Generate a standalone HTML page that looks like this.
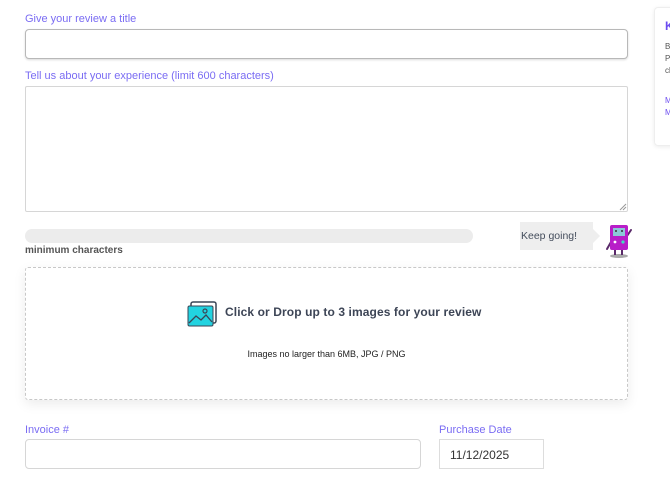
<!DOCTYPE html>
<html><head><style>
*{box-sizing:border-box;margin:0;padding:0}
body{width:670px;height:479px;background:#fff;font-family:"Liberation Sans",sans-serif;position:relative;overflow:hidden}
.a{position:absolute}
.lbl{color:#7a6cf3;font-size:11px}
.inp{border:1px solid #d6d6d6;border-radius:4px;background:#fff}
</style></head><body>
<div class="a lbl" style="left:25px;top:13px">Give your review a title</div>
<div class="a inp" style="left:25px;top:29px;width:603px;height:30px;border:1px solid #b8b8b8;box-shadow:0 1px 2px rgba(0,0,0,.15)"></div>
<div class="a lbl" style="left:25px;top:70px">Tell us about your experience (limit 600 characters)</div>
<div class="a inp" style="left:25px;top:86px;width:603px;height:126px;border-radius:2px"></div>
<svg class="a" style="left:619px;top:203px" width="8" height="8"><path d="M7 1L1 7M7 4L4 7" stroke="#999" stroke-width="1"/></svg>
<div class="a" style="left:25px;top:229px;width:448px;height:14px;background:#ececec;border-radius:7px"></div>
<div class="a" style="left:25px;top:245px;font-size:10px;font-weight:bold;color:#555">minimum characters</div>
<div class="a" style="left:520px;top:222px;width:73px;height:28px;background:#eeeeee;font-size:10.5px;color:#444d5c;line-height:28px;padding-left:1px">Keep going!</div>
<div class="a" style="left:593px;top:229px;width:0;height:0;border-top:7px solid transparent;border-bottom:7px solid transparent;border-left:7px solid #eee"></div>
<svg class="a" style="left:603px;top:222px" width="32" height="38" viewBox="0 0 32 38">
<ellipse cx="16" cy="34" rx="9" ry="2" fill="#aaa"/>
<path d="M8 20L4 27M24 14L28 8" stroke="#5a2a6a" stroke-width="2" stroke-linecap="round"/>
<path d="M12 27v6M19 27v6" stroke="#5a2a6a" stroke-width="2"/>
<rect x="7" y="3" width="18" height="25" rx="2" fill="#b81ec8"/>
<rect x="10" y="6" width="12" height="8" fill="#8cc8d8"/>
<circle cx="13" cy="9" r="1" fill="#333"/><circle cx="19" cy="9" r="1" fill="#333"/>
<circle cx="20" cy="20" r="1.6" fill="#3ee0c0"/><circle cx="12" cy="20" r="1.4" fill="#fff"/>
</svg>
<div class="a" style="left:25px;top:267px;width:603px;height:133px;border:1px dashed #c8c8c8;border-radius:3px;box-shadow:0 4px 12px rgba(0,0,0,.08)"></div>
<svg class="a" style="left:187px;top:301px" width="30" height="26" viewBox="0 0 30 26">
<rect x="4" y="1" width="25" height="21" rx="2" fill="none" stroke="#3a4656" stroke-width="1.5"/>
<rect x="1" y="5" width="25" height="20" rx="1.5" fill="#22d3e0" stroke="#3a4656" stroke-width="1"/>
<path d="M2 22L9 15L14 19L19 14L25 21" fill="none" stroke="#3a4656" stroke-width="1.3"/>
<circle cx="18" cy="10" r="2" fill="none" stroke="#3a4656" stroke-width="1.2"/>
</svg>
<div class="a" style="left:225px;top:305px;font-size:12px;font-weight:bold;color:#3d4556;letter-spacing:0.1px">Click or Drop up to 3 images for your review</div>
<div class="a" style="left:0;width:653px;text-align:center;top:349px;font-size:9px;color:#222">Images no larger than 6MB, JPG / PNG</div>
<div class="a lbl" style="left:25px;top:424px">Invoice #</div>
<div class="a inp" style="left:25px;top:439px;width:396px;height:30px"></div>
<div class="a lbl" style="left:439px;top:424px">Purchase Date</div>
<div class="a" style="left:439px;top:439px;width:105px;height:30px;border:1px solid #ddd;font-size:12px;color:#333;line-height:30px;padding-left:10px">11/12/2025</div>
<div class="a" style="left:654px;top:7px;width:30px;height:139px;border:1px solid #eee;border-radius:4px;box-shadow:0 1px 4px rgba(0,0,0,.08);padding-left:10px;font-size:8px;color:#555">
<div style="color:#6c4cf0;font-weight:bold;font-size:12px;margin-top:11px">K</div>
<div style="margin-top:8px;line-height:12px">B<br>P<br>cl</div>
<div style="color:#6c4cf0;margin-top:18px;line-height:12px">M<br>M</div>
</div>
</body></html>
